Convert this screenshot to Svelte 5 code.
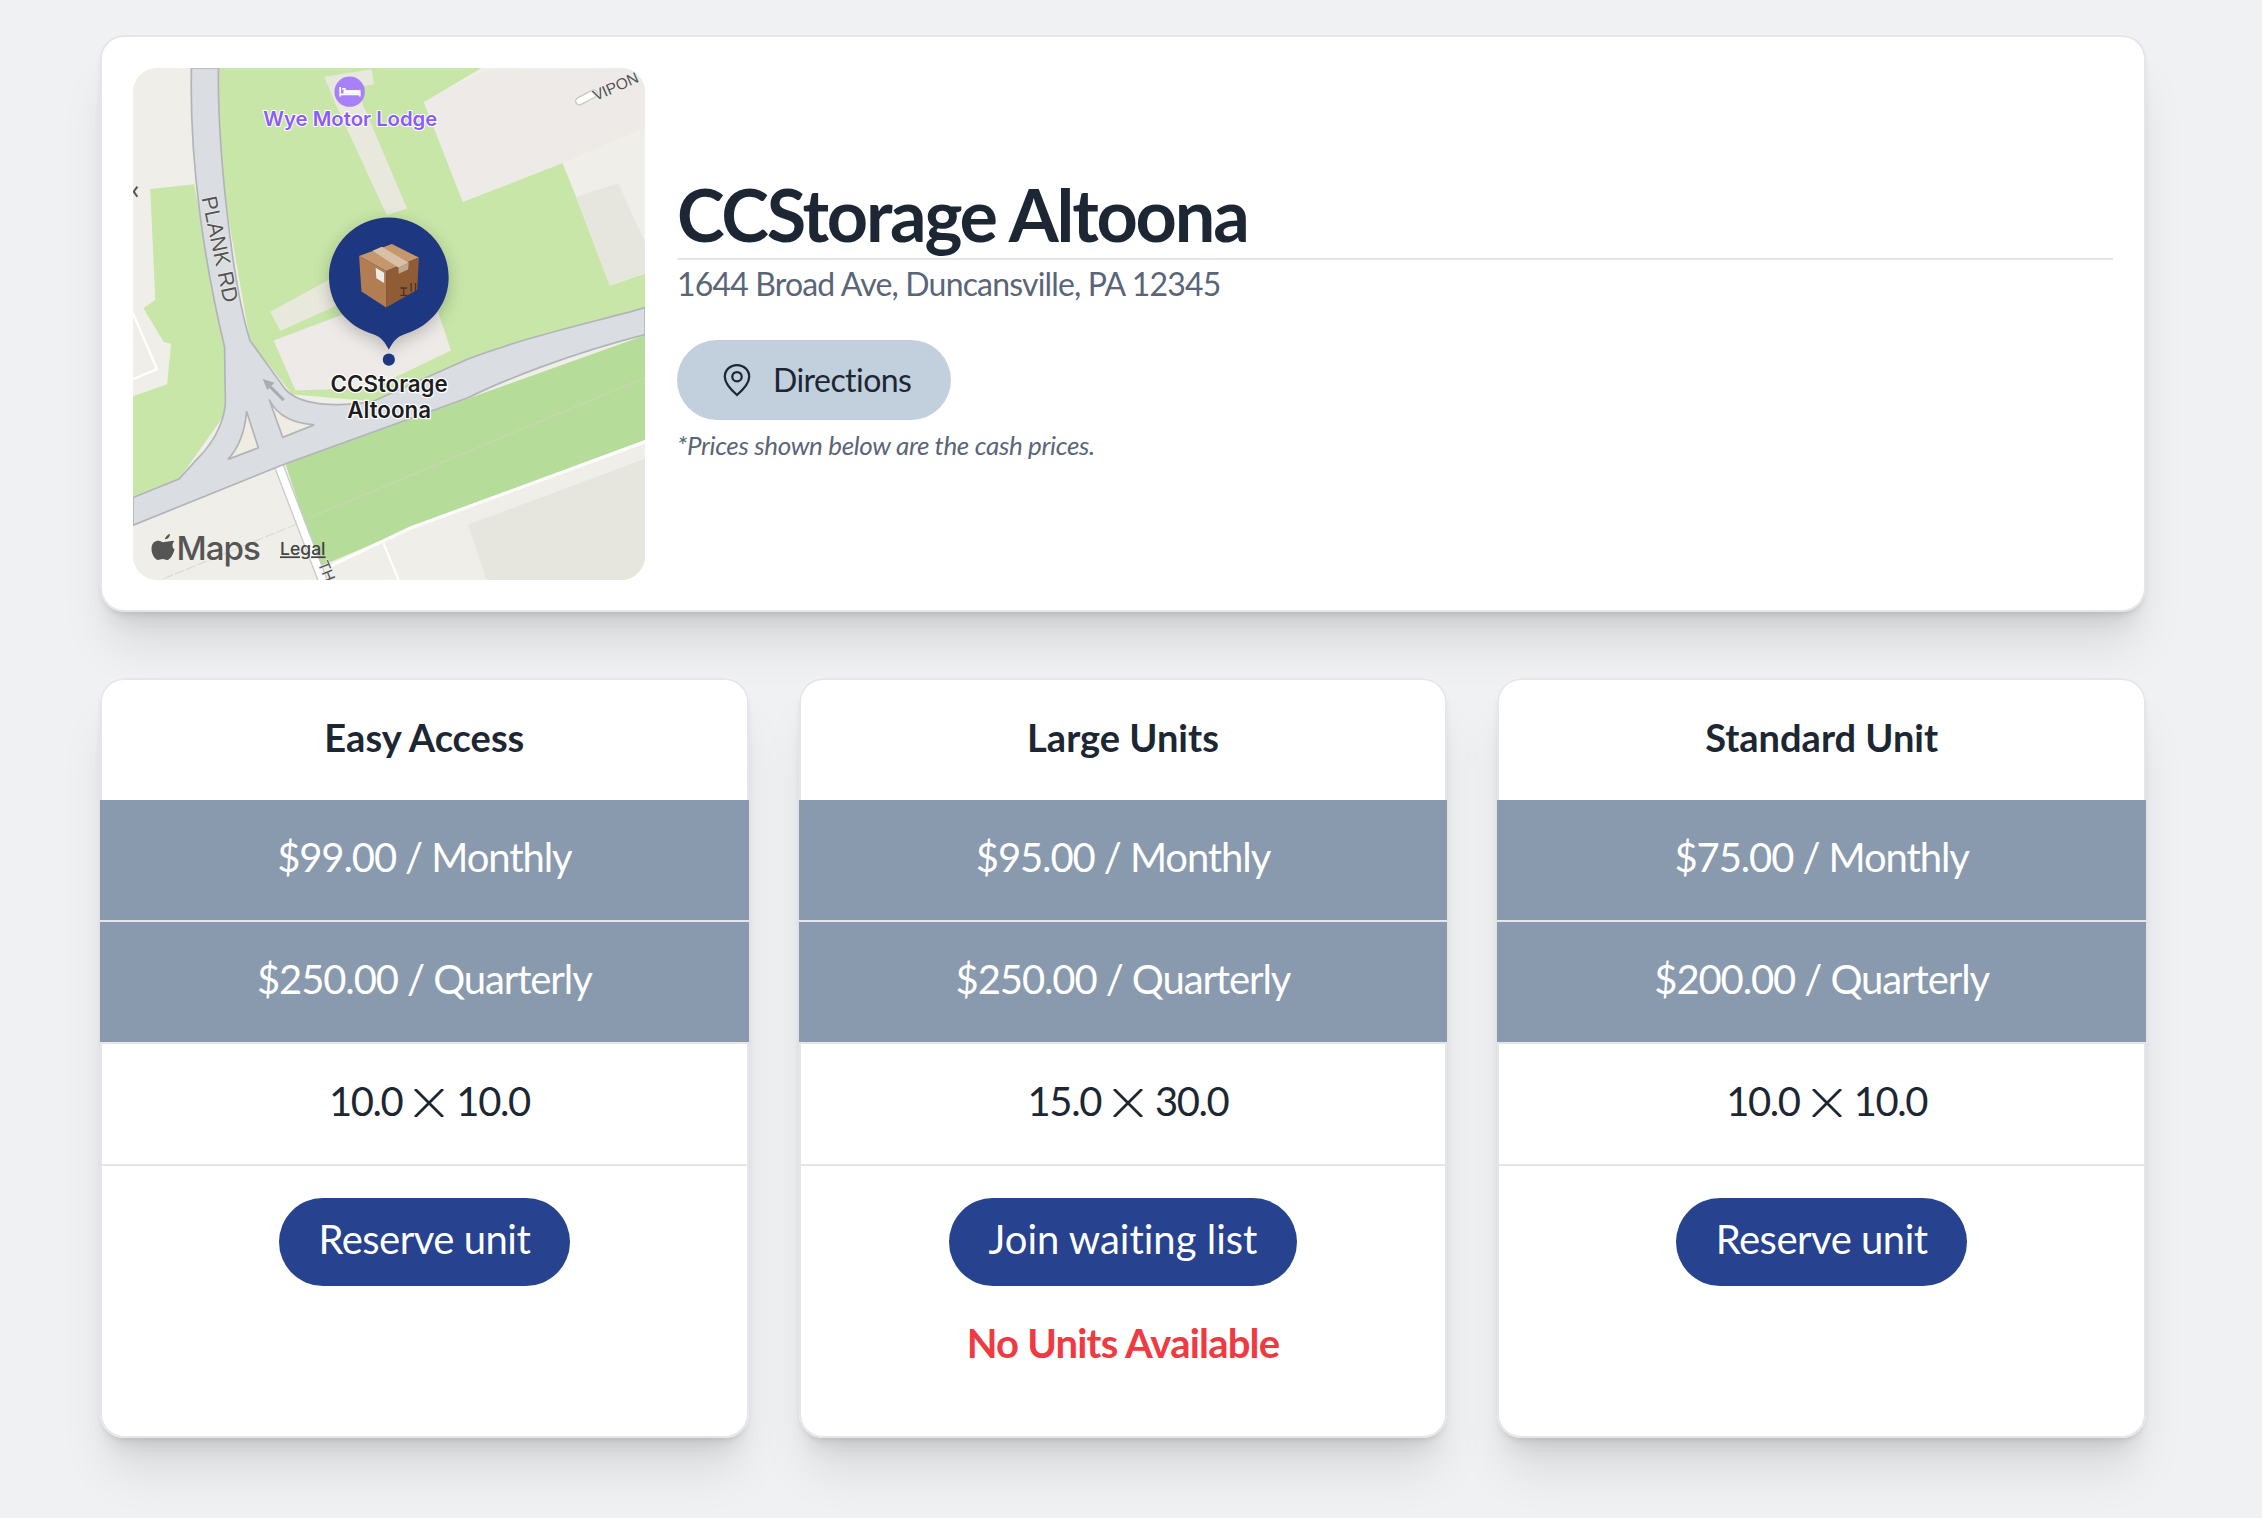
<script>
  const units = [
    { name: 'Easy Access', month: '$99.00', quarter: '$250.00', w: '10.0', h: '10.0', action: 'Reserve unit', none: false },
    { name: 'Large Units', month: '$95.00', quarter: '$250.00', w: '15.0', h: '30.0', action: 'Join waiting list', none: true },
    { name: 'Standard Unit', month: '$75.00', quarter: '$200.00', w: '10.0', h: '10.0', action: 'Reserve unit', none: false }
  ];
</script>

<main class="page">
  <section class="hero">
    <div class="map">
      <svg viewBox="9 24 1515 1515" width="512" height="512" role="img" aria-label="Map">
        <rect x="9" y="24" width="1515" height="1515" fill="#f0eee8" />
        <path d="M262 24H1040L870 125L985 420L1280 305L1320 405L1420 668L1524 632V740L720 1010L480 990L355 830L262 300Z" fill="#c8e6a8" />
        <path d="M1040 36L1524 24V200L1280 305L985 420L870 125Z" fill="#eeeae7" />
        <path d="M1320 405L1445 365L1524 540V630L1420 668Z" fill="#e6e6de" />
        <path d="M575 50L715 28L722 72L668 82L820 440L760 460L610 135Z" fill="#e8e8dc" />
        <path d="M415 745L590 650L622 722L445 802Z" fill="#e8e8dc" />
        <path d="M425 830L740 712L910 740L950 860L720 970L490 978Z" fill="#eeeae7" />
        <path d="M60 382L190 368L280 850V1050L145 1240L9 1295V995L110 960L122 840L100 835L40 735L75 710Z" fill="#c8e6a8" />
        <path d="M9 750L80 915L9 945" fill="none" stroke="#fff" stroke-width="7" />
        <path d="M460 1195L1524 815V1125L830 1385L560 1500Z" fill="#b6dc9a" />
        <path d="M530 1355L1524 940" stroke="#c6d8ae" stroke-width="4" fill="none" />
        <path d="M100 1535L490 1375" stroke="#d8d8d0" stroke-width="3" stroke-dasharray="30 6" fill="none" />
        <path d="M1000 1375L1524 1180V1539H1055Z" fill="#e6e6de" />
        <path d="M1524 1130L830 1385L610 1490L590 1500" stroke="#fff" stroke-width="9" fill="none" />
        <path d="M750 1430L795 1539" stroke="#fff" stroke-width="6" fill="none" />
        <path d="M440 1200L570 1539" stroke="#c9cbce" stroke-width="30" fill="none" />
        <path d="M440 1200L570 1539" stroke="#fff" stroke-width="22" fill="none" />
        <path d="M182 24H262C258 250 300 650 355 830L460 975C500 1020 600 1030 720 1010L1000 885C1200 810 1400 770 1524 733V813C1300 870 1100 950 1000 1000L460 1195L9 1377V1295L145 1240L200 1180C260 1120 285 1050 282 1000L280 850C220 600 175 300 182 24Z" fill="#dadde1" stroke="#b2b4b8" stroke-width="5" />
        <path d="M345 1040C340 1100 320 1150 290 1182L380 1148Z" fill="#efece4" stroke="#b2b4b8" stroke-width="5" />
        <path d="M412 1005C440 1060 490 1075 545 1080L452 1117Z" fill="#efece4" stroke="#b2b4b8" stroke-width="5" />
        <path d="M455 1007L415 967" stroke="#aaacaf" stroke-width="9" fill="none" />
        <path d="M393 944L428 955L406 977Z" fill="#aaacaf" />
        <path d="M1330 122L1372 100" stroke="#c8c8c4" stroke-width="26" stroke-linecap="round" />
        <path d="M1330 122L1372 100" stroke="#fff" stroke-width="18" stroke-linecap="round" />
        <path d="M22 375L11 390L22 405" fill="none" stroke="#555" stroke-width="6" />

        <text class="road plank" transform="translate(212 408) rotate(78)">PLANK RD</text>
        <text class="road vipon" transform="translate(1378 122) rotate(-24)">VIPON</text>
        <text class="road vipon" transform="translate(556 1490) rotate(68)">TH</text>

        <circle cx="650" cy="94" r="45" fill="#a881f9" />
        <path d="M622 80V108M622 102H680V108M680 102V92H636V86H628" fill="none" stroke="#fff" stroke-width="5" />
        <rect x="632" y="90" width="46" height="10" fill="#fff" />
        <text class="poi" x="652" y="195">Wye Motor Lodge</text>

        <path class="pin" d="M766 466C668 466 589 545 589 643C589 722 640 787 720 812C744 820 756 838 766 858C776 838 788 820 812 812C892 787 943 722 943 643C943 545 864 466 766 466Z" fill="#1e3781" />
        <circle cx="766" cy="887" r="18" fill="#1e3781" />
        <path d="M678 580L775 545L855 585L758 625Z" fill="#c4976c" />
        <path d="M678 580L758 625V733L685 685Z" fill="#b27d52" />
        <path d="M758 625L855 585L850 680L758 733Z" fill="#8f5c36" />
        <path d="M718 565L745 553L825 600L795 615Z" fill="#d8c0a4" />
        <path d="M795 615L825 600L823 620L795 633Z" fill="#bda78f" />
        <path d="M727 615L752 630V660L729 646Z" fill="#eeece6" />
        <path d="M800 675H820M810 675V695M800 697H820M832 660V685M845 660V685" stroke="#4e3220" stroke-width="4" />
        <text class="pinlabel" x="767" y="982">CCStorage</text>
        <text class="pinlabel" x="767" y="1060">Altoona</text>

        <path d="M103 1418C106 1410 112 1404 118 1403C119 1411 112 1419 103 1418ZM118 1424C124 1424 128 1421 131 1425C123 1431 125 1444 132 1449C129 1460 120 1480 110 1480C104 1480 103 1477 97 1477C90 1477 88 1480 83 1480C72 1478 62 1458 64 1442C66 1428 76 1422 85 1423C91 1423 94 1427 98 1427C103 1427 110 1424 118 1424Z" fill="#555" />
        <text class="brand" x="138" y="1479">Maps</text>
        <text class="legal" x="444" y="1466">Legal</text>
      </svg>
    </div>
    <div class="info">
      <h1>CCStorage Altoona</h1>
      <p class="address">1644 Broad Ave, Duncansville, PA 12345</p>
      <button class="directions">
        <svg width="30" height="34" viewBox="0 0 32 36" fill="none" stroke="#1c2733" stroke-width="2.4">
          <path d="M16 34C8 27 3 21 3 14.5C3 7.500 8.800 2 16 2S29 7.500 29 14.500C29 21 24 27 16 34Z" />
          <circle cx="16" cy="14.500" r="5" />
        </svg>
        <span>Directions</span>
      </button>
      <p class="note">*Prices shown below are the cash prices.</p>
    </div>
  </section>

  <section class="units">
    {#each units as unit}
      <article class="unit">
        <h2>{unit.name}</h2>
        <div class="price">{unit.month} / Monthly</div>
        <div class="price">{unit.quarter} / Quarterly</div>
        <div class="size">
          <span>{unit.w}</span>
          <svg width="30" height="28" viewBox="0 0 30 28" stroke="#1c2733" stroke-width="2.8">
            <path d="M1 0L29 28M29 0L1 28" />
          </svg>
          <span>{unit.h}</span>
        </div>
        <div class="action">
          <button class="reserve" class:wait={unit.none}>{unit.action}</button>
          {#if unit.none}<p class="none">No Units Available</p>{/if}
        </div>
      </article>
    {/each}
  </section>
</main>

<style>
  :global(body) {
    margin: 0;
    background: #f0f1f3;
    font-family: Lato, "Open Sans", sans-serif;
    font-variant-ligatures: none;
    color: #1c2733;
  }
  .page {
    width: 2046px;
    margin-left: 100px;
    padding-top: 35px;
    height: 1483px;
  }
  .hero {
    display: flex;
    gap: 32px;
    padding: 31px;
    background: #fff;
    border: 2px solid #e5e6eb;
    border-radius: 24px;
    box-shadow: 0 40px 50px -10px rgba(0, 0, 0, 0.1), 0 20px 20px -10px rgba(0, 0, 0, 0.08), 0 4px 6px -2px rgba(0, 0, 0, 0.1);
    box-sizing: border-box;
    height: 577px;
  }
  .map {
    width: 512px;
    height: 512px;
    flex: none;
    border-radius: 24px;
    overflow: hidden;
  }
  .map svg { display: block; }
  .road { font-family: "Liberation Sans", sans-serif; fill: #555; paint-order: stroke; stroke: #eee; stroke-width: 4px; }
  .plank { font-size: 64px; }
  .vipon { font-size: 46px; }
  .poi { font-family: Inter, sans-serif; font-size: 60px; font-weight: 600; fill: #8b5cf6; text-anchor: middle; paint-order: stroke; stroke: #fff; stroke-width: 6px; }
  .pin { filter: drop-shadow(0 14px 24px rgba(0, 0, 0, 0.22)); }
  .pinlabel { font-family: Inter, sans-serif; font-size: 66px; font-weight: 600; fill: #1d1d1f; text-anchor: middle; paint-order: stroke; stroke: #fff; stroke-width: 7px; }
  .brand { font-family: Inter, sans-serif; font-size: 98px; font-weight: 500; fill: #555; letter-spacing: -3px; }
  .legal { font-family: Inter, sans-serif; font-size: 52px; font-weight: 500; fill: #444; text-decoration: underline; }
  .info {
    flex: 1;
    display: flex;
    flex-direction: column;
    align-items: flex-start;
    justify-content: center;
    padding-bottom: 13px;
  }
  h1 {
    margin: 0;
    align-self: stretch;
    padding-bottom: 4px;
    font-size: 72px;
    line-height: 80px;
    font-weight: 700;
    letter-spacing: -2.2px;
    color: #1c2733;
    border-bottom: 2px solid #e5e6eb;
  }
  .address {
    margin: 4px 0 0;
    font-size: 32px;
    line-height: 40px;
    letter-spacing: -0.83px;
    color: #5a6577;
  }
  .directions {
    margin-top: 36px;
    width: 274px;
    height: 80px;
    display: flex;
    align-items: center;
    gap: 21px;
    padding: 0 0 0 45px;
    border: 0;
    border-radius: 40px;
    background: #c2cfdd;
    color: #1c2733;
    font: inherit;
    font-size: 32px;
    letter-spacing: -0.55px;
  }
  .note {
    margin: 9px 0 0;
    font-size: 26px;
    line-height: 32px;
    font-style: italic;
    letter-spacing: -0.35px;
    color: #5a6577;
  }
  .units {
    margin-top: 66px;
    display: grid;
    grid-template-columns: repeat(3, 1fr);
    gap: 50px;
  }
  .unit {
    height: 760px;
    display: flex;
    flex-direction: column;
    background: #fff;
    border-radius: 24px;
    overflow: hidden;
    box-shadow: 0 40px 50px -10px rgba(0, 0, 0, 0.1), 0 20px 20px -10px rgba(0, 0, 0, 0.08), 0 4px 6px -2px rgba(0, 0, 0, 0.1);
    text-align: center;
  }
  h2 {
    margin: 0;
    box-sizing: border-box;
    height: 122px;
    padding-bottom: 6px;
    display: flex;
    align-items: center;
    justify-content: center;
    font-size: 38px;
    font-weight: 700;
    color: #1c2733;
    border: 2px solid #e5e6eb;
    border-bottom: 0;
    border-radius: 24px 24px 0 0;
  }
  .price {
    box-sizing: border-box;
    height: 122px;
    padding-bottom: 6px;
    display: flex;
    align-items: center;
    justify-content: center;
    background: #8a9aae;
    color: #fff;
    font-size: 40px;
    letter-spacing: -1.1px;
    border-bottom: 2px solid #e5e6eb;
  }
  .size {
    box-sizing: border-box;
    height: 122px;
    padding: 0 0 6px 10px;
    display: flex;
    align-items: center;
    justify-content: center;
    gap: 12px;
    font-size: 40px;
    letter-spacing: -1.4px;
    border: 2px solid #e5e6eb;
    border-width: 0 2px 2px;
  }
  .size svg { margin-top: 3px; }
  .action {
    flex: 1;
    padding-top: 32px;
    display: flex;
    flex-direction: column;
    align-items: center;
    border: 2px solid #e5e6eb;
    border-top: 0;
    border-radius: 0 0 24px 24px;
  }
  .reserve {
    width: 291px;
    height: 88px;
    border: 0;
    border-radius: 44px;
    background: #27428f;
    color: #fff;
    font: inherit;
    font-size: 40px;
    letter-spacing: -0.5px;
    padding: 0 0 6px;
  }
  .wait { width: 348px; letter-spacing: 0; }
  .none {
    margin: 32px 0 0;
    font-size: 40px;
    line-height: 50px;
    font-weight: 700;
    letter-spacing: -0.8px;
    color: #ef3a42;
  }
</style>
